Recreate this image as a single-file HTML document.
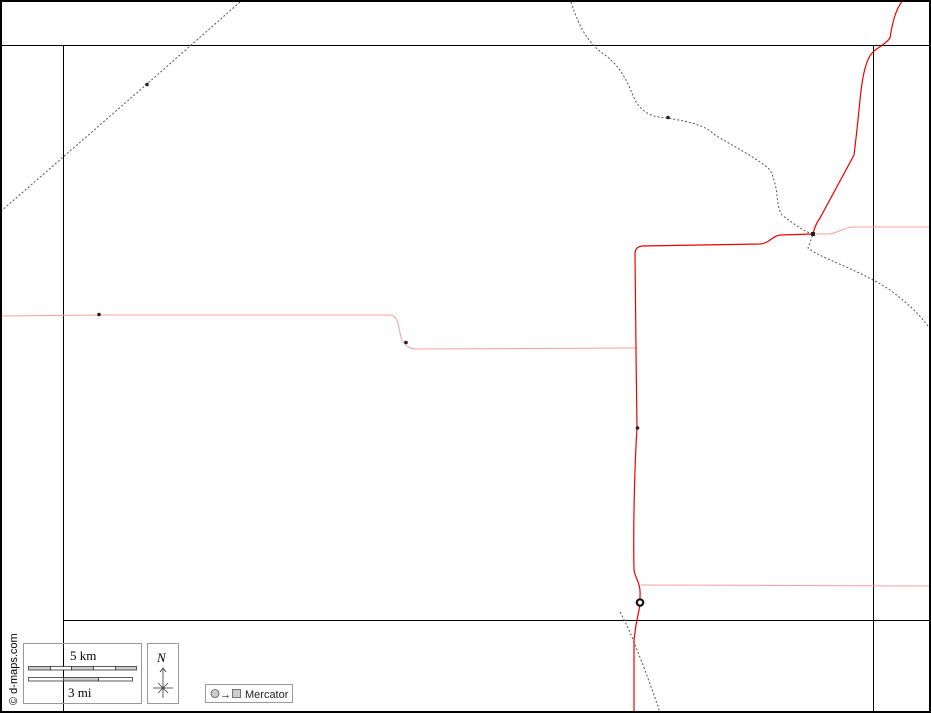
<!DOCTYPE html>
<html><head><style>
html,body{margin:0;padding:0;background:#fff;}
svg{display:block;}
</style></head><body>
<svg width="931" height="713" viewBox="0 0 931 713" xmlns="http://www.w3.org/2000/svg" font-family="Liberation Serif, serif">
<rect x="0" y="0" width="931" height="713" fill="#fff"/>
<!-- frame lines -->
<g stroke="#000" stroke-width="1" fill="none">
<line x1="0" y1="45.5" x2="931" y2="45.5"/>
<line x1="63.5" y1="45" x2="63.5" y2="713"/>
<line x1="873.5" y1="45" x2="873.5" y2="713"/>
<line x1="63" y1="620.5" x2="931" y2="620.5"/>
</g>
<!-- dotted paths -->
<g stroke="#555" stroke-width="1" stroke-dasharray="2,2" fill="none">
<path d="M240,2 L147,84 L0,212"/>
<path d="M571,2 C580,30 590,45 605,55 C625,70 630,90 635,100 C645,118 660,117 668,118 C690,122 705,125 715,135 C740,150 760,160 770,170 C780,190 775,205 782,215 C795,225 805,232 813,234 L808,248 C820,258 860,270 890,290 C910,305 920,315 931,330"/>
<path d="M620,612 C630,630 635,645 645,670 C652,690 656,700 660,713"/>
</g>
<!-- pink roads -->
<g stroke="#f4a0a0" stroke-width="1" fill="none">
<path d="M0,316 L99,315 L390,315 C400,316 398,330 402,340 C406,347 410,349 418,349 L636,348"/>
<path d="M813,234 L830,234 C840,232 845,227 855,227 L931,227"/>
<path d="M641,585 L931,586"/>
</g>
<!-- red roads -->
<g stroke="#e00" stroke-width="1.2" fill="none">
<path d="M903,0 C895,10 892,25 890,38 C885,45 878,47 873,52 C865,60 862,80 860,100 C858,120 856,140 854,155 L820,218 C815,225 814,230 813,234 L780,235 C772,236 770,243 760,244 L642,246 C636,247 635,250 635,255 L636,350 L637,428 C635,460 633,520 634,570 C635,578 641,583 640,596 L640,605 L636,625 L634,640 L634,713"/>
</g>
<!-- points -->
<g fill="#222">
<circle cx="147" cy="84.5" r="1.8"/>
<circle cx="668" cy="117.5" r="1.8"/>
<circle cx="99" cy="314.5" r="1.8"/>
<circle cx="406" cy="342.5" r="1.8"/>
<circle cx="637.5" cy="428" r="1.8"/>
<rect x="811" y="232" width="4" height="4"/>
</g>
<circle cx="640" cy="602.5" r="3.2" fill="#fff" stroke="#111" stroke-width="2.2"/>
<!-- outer border -->
<rect x="1" y="1" width="929" height="711" fill="none" stroke="#000" stroke-width="2"/>
<!-- legend -->
<text transform="translate(17,705) rotate(-90)" font-family="Liberation Sans, sans-serif" font-size="11" fill="#000">© d-maps.com</text>
<rect x="23.5" y="643.5" width="118" height="60" fill="none" stroke="#999"/>
<text x="70" y="660" font-size="13">5 km</text>
<g stroke="#333" stroke-width="0.8">
<rect x="28.5" y="666.5" width="22" height="3.5" fill="#ccc"/>
<rect x="50.5" y="666.5" width="21" height="3.5" fill="#fff"/>
<rect x="71.5" y="666.5" width="22" height="3.5" fill="#ccc"/>
<rect x="93.5" y="666.5" width="22" height="3.5" fill="#fff"/>
<rect x="115.5" y="666.5" width="21" height="3.5" fill="#ccc"/>
<rect x="28.5" y="677.5" width="35" height="3.5" fill="#fff"/>
<rect x="63.5" y="677.5" width="35" height="3.5" fill="#ccc"/>
<rect x="98.5" y="677.5" width="34" height="3.5" fill="#fff"/>
</g>
<text x="68" y="697" font-size="13">3 mi</text>
<rect x="147.5" y="643.5" width="31" height="60" fill="none" stroke="#999"/>
<text x="157" y="662" font-size="13" font-style="italic">N</text>
<g stroke="#333" stroke-width="0.8" fill="none">
<line x1="163" y1="668" x2="163" y2="698"/>
<path d="M160,672 L163,668 L166,672"/>
<line x1="153" y1="688" x2="173" y2="688"/>
<line x1="158" y1="683" x2="168" y2="693"/>
<line x1="168" y1="683" x2="158" y2="693"/>
</g>
<rect x="205.5" y="684.5" width="87" height="18" fill="none" stroke="#999"/>
<circle cx="215" cy="693.5" r="4" fill="#ccc" stroke="#555" stroke-width="0.8"/>
<text x="220" y="698" font-size="11" font-family="Liberation Sans, sans-serif">→</text>
<rect x="232.5" y="689.5" width="8" height="8" fill="#ccc" stroke="#555" stroke-width="0.8"/>
<text x="245" y="698" font-size="11" font-family="Liberation Sans, sans-serif" fill="#222">Mercator</text>
</svg>
</body></html>
